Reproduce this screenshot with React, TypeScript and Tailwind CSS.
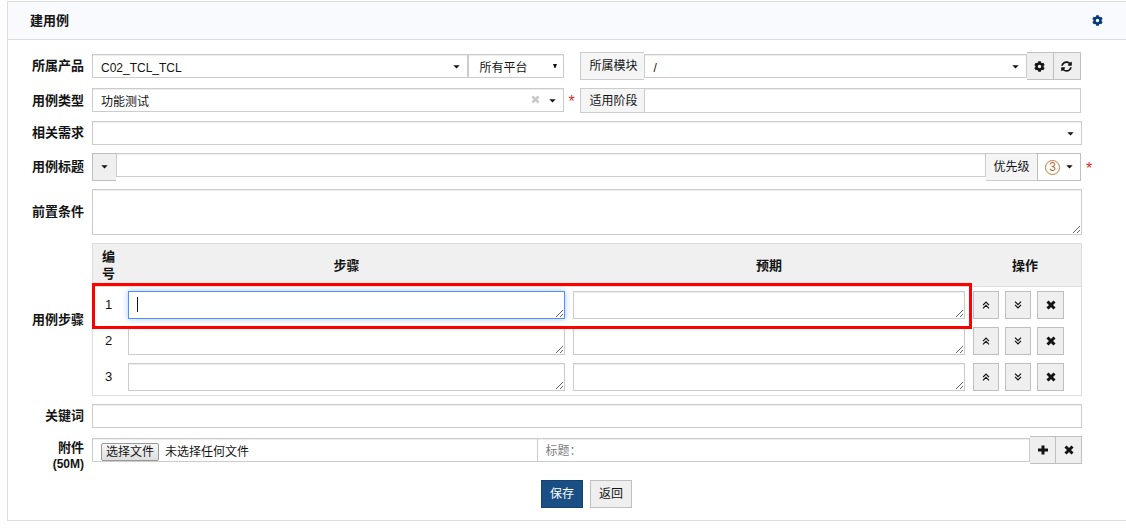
import React, { useState } from 'react';
import clsx from 'clsx';
import { FaCog, FaSyncAlt } from 'react-icons/fa';

const INPUT =
  'block min-w-0 border border-[#ccc] bg-white text-xs text-[#141414] shadow-[inset_0_1px_1px_rgba(0,0,0,0.075)] outline-none placeholder:text-[#808080]';
const FOCUS =
  'focus:border-[#4d90fe] focus:shadow-[0_0_6px_rgba(77,144,254,0.5)]';
const BUTTON =
  'flex h-7 shrink-0 items-center justify-center border border-[#bfbfbf] text-[#141414]';
const ADDON =
  'flex shrink-0 items-center border border-[#ccc] bg-[#f5f5f5] text-xs whitespace-nowrap';

function Caret({ className }: { className?: string }) {
  return (
    <svg
      className={className}
      width="7"
      height="4"
      viewBox="0 0 7 4"
      fill="currentColor"
      aria-hidden="true"
    >
      <path d="M0.3 0.2h6.4L3.5 3.6z" />
    </svg>
  );
}

function CrossIcon({ size = 10 }: { size?: number }) {
  return (
    <svg width={size} height={size} viewBox="0 0 10 10" aria-hidden="true">
      <path d="M1.5 1.5l7 7M8.5 1.5l-7 7" stroke="currentColor" strokeWidth="3" />
    </svg>
  );
}

function PlusIcon() {
  return (
    <svg width="10" height="10" viewBox="0 0 10 10" aria-hidden="true">
      <path d="M5 0.5v9M0 5h10" stroke="currentColor" strokeWidth="3" />
    </svg>
  );
}

function DoubleAngle({ down }: { down?: boolean }) {
  return (
    <svg
      className={clsx(down && 'rotate-180')}
      width="8"
      height="8"
      viewBox="0 0 8 8"
      fill="none"
      stroke="currentColor"
      strokeWidth="1.2"
      aria-hidden="true"
    >
      <path d="M1 4.2L4 1.2l3 3M1 7.4l3-3 3 3" />
    </svg>
  );
}

interface SelectProps {
  id: string;
  label?: string;
  options: string[];
  className?: string;
  small?: boolean;
  onClear?: () => void;
}

function Select({ id, label, options, className, small, onClear }: SelectProps) {
  return (
    <div className={clsx('relative min-w-0', className)}>
      <select
        id={id}
        aria-label={label}
        className={clsx(
          INPUT,
          FOCUS,
          'h-6 w-full appearance-none pt-1 pr-2',
          small ? 'pl-2.5' : 'pl-2'
        )}
      >
        {options.map((item) => (
          <option key={item}>{item}</option>
        ))}
      </select>
      {onClear && (
        <button
          type="button"
          aria-label="清除"
          onClick={onClear}
          className="absolute top-[7px] right-6 text-[#c8c8c8]"
        >
          <CrossIcon size={9} />
        </button>
      )}
      {small ? (
        <svg
          className="pointer-events-none absolute top-[10px] right-[7px]"
          width="4"
          height="4"
          viewBox="0 0 4 4"
          aria-hidden="true"
        >
          <path d="M0 0h4L2.5 4h-1z" fill="#141414" />
        </svg>
      ) : (
        <Caret className="pointer-events-none absolute top-[11px] right-2" />
      )}
    </div>
  );
}

interface RowProps {
  label: React.ReactNode;
  htmlFor?: string;
  required?: boolean;
  top?: boolean;
  children: React.ReactNode;
}

function Row({ label, htmlFor, required, top, children }: RowProps) {
  return (
    <div className={clsx('flex', top ? 'items-start' : 'items-center')}>
      <label
        htmlFor={htmlFor}
        className={clsx(
          'mr-2 w-19 shrink-0 text-right text-[13px] leading-4 font-bold',
          top && 'pt-1'
        )}
      >
        {label}
      </label>
      <div className="min-w-0 flex-1">{children}</div>
      <div className="w-11 shrink-0 pl-1">{required && <Star />}</div>
    </div>
  );
}

function Star() {
  return (
    <span className="block h-4 text-base leading-5 text-[#d2322d]">*</span>
  );
}

function StepTable() {
  const [steps, setSteps] = useState<number[]>([1, 2, 3]);

  const move = (index: number, offset: number) => {
    const target = index + offset;
    if (target < 0 || target >= steps.length) return;
    const next = [...steps];
    [next[index], next[target]] = [next[target], next[index]];
    setSteps(next);
  };

  return (
    <div className="relative">
      <table className="w-full table-fixed border-separate border-spacing-0 border border-[#ddd]">
        <colgroup>
          <col className="w-[31px]" />
          <col />
          <col className="w-[40.5%]" />
          <col className="w-28" />
        </colgroup>
        <thead>
          <tr className="bg-[#f0f0f0] text-[13px] leading-[17px]">
            <th className="border-b border-[#ddd] px-2 py-1">编号</th>
            <th className="border-b border-[#ddd] py-1">步骤</th>
            <th className="border-b border-[#ddd] py-1">预期</th>
            <th className="border-b border-[#ddd] py-1">操作</th>
          </tr>
        </thead>
        <tbody>
          {steps.map((id, index) => (
            <tr key={id}>
              <td className="p-0 text-center text-[13px]">{index + 1}</td>
              <td className="relative p-1">
                <textarea
                  aria-label={`步骤 ${index + 1}`}
                  autoFocus={id === 1}
                  placeholder=" "
                  className={clsx(
                    INPUT,
                    FOCUS,
                    'peer h-7 w-full resize px-2 py-1 placeholder-shown:caret-transparent'
                  )}
                />
                {/* text cursor of an empty field */}
                <span className="pointer-events-none absolute top-[10px] left-[13px] hidden h-[15px] w-px bg-[#141414] peer-placeholder-shown:peer-focus:block" />
              </td>
              <td className="p-1">
                <textarea
                  aria-label={`预期 ${index + 1}`}
                  className={clsx(INPUT, FOCUS, 'h-7 w-full resize px-2 py-1')}
                />
              </td>
              <td className="p-1">
                <div className="flex gap-1.5">
                  <button
                    type="button"
                    aria-label="上移"
                    className={clsx(BUTTON, 'w-[26px] bg-[#efefef]')}
                    onClick={() => move(index, -1)}
                  >
                    <DoubleAngle />
                  </button>
                  <button
                    type="button"
                    aria-label="下移"
                    className={clsx(BUTTON, 'w-[26px] bg-[#efefef]')}
                    onClick={() => move(index, 1)}
                  >
                    <DoubleAngle down />
                  </button>
                  <button
                    type="button"
                    aria-label="删除"
                    className={clsx(BUTTON, 'w-[27px] bg-[#efefef]')}
                    onClick={() => setSteps(steps.filter((s) => s !== id))}
                  >
                    <CrossIcon />
                  </button>
                </div>
              </td>
            </tr>
          ))}
        </tbody>
      </table>
      {/* highlight around the first step */}
      <div className="pointer-events-none absolute top-10 right-[110px] left-0 h-[46px] border-3 border-[#f00]" />
    </div>
  );
}

function App() {
  const [type, setType] = useState<string>('功能测试');

  return (
    <div className="bg-white pt-px pl-[7px] font-['Liberation_Sans','Noto_Sans_CJK_SC',sans-serif] text-[#141414]">
      <form
        className="border border-r-0 border-[#ddd]"
        onSubmit={(e) => e.preventDefault()}
      >
        <div className="flex h-[38px] items-center justify-between border-b border-[#ddd] bg-[#f8fafe] pr-[23px] pl-[22px]">
          <h1 className="text-[13px] font-bold">建用例</h1>
          <button type="button" aria-label="设置" className="text-[#03387a]">
            <FaCog size={11} />
          </button>
        </div>

        <div className="flex flex-col gap-2 py-3">
          <Row label="所属产品" htmlFor="product">
            <div className="grid grid-cols-[488fr_500fr] items-center pr-px">
              <div className="flex pr-4">
                <Select id="product" options={['C02_TCL_TCL']} className="flex-1" />
                <Select
                  id="branch"
                  label="平台"
                  options={['所有平台']}
                  className="w-24"
                  small
                />
              </div>
              <div className="flex items-center">
                <label htmlFor="module" className={clsx(ADDON, 'h-7 w-16 border-r-0 pl-2')}>
                  所属模块
                </label>
                <Select id="module" options={['/']} className="flex-1" />
                <button
                  type="button"
                  aria-label="维护模块"
                  className={clsx(BUTTON, 'w-[26px] border-x-0 bg-[#efefef]')}
                >
                  <FaCog size={11} />
                </button>
                <button
                  type="button"
                  aria-label="刷新"
                  className={clsx(BUTTON, 'w-7 bg-[#efefef]')}
                >
                  <FaSyncAlt size={11} />
                </button>
              </div>
            </div>
          </Row>

          <Row label="用例类型" htmlFor="type">
            <div className="grid grid-cols-[488fr_500fr] items-start pr-px">
              <div className="flex items-center">
                <Select
                  id="type"
                  options={[type]}
                  className="flex-1"
                  onClear={() => setType('')}
                />
                <div className="w-4 pl-1">
                  <Star />
                </div>
              </div>
              <div className="flex items-start">
                <label
                  htmlFor="stage"
                  className={clsx(ADDON, 'h-[25px] w-16 border-r-0 pl-2')}
                >
                  适用阶段
                </label>
                <input
                  id="stage"
                  type="text"
                  className={clsx(INPUT, FOCUS, 'h-[25px] flex-1 px-2')}
                />
              </div>
            </div>
          </Row>

          <Row label="相关需求" htmlFor="story">
            <Select id="story" options={['']} />
          </Row>

          <Row label="用例标题" htmlFor="title" required>
            <div className="flex items-start pr-px">
              <button
                type="button"
                aria-label="标题颜色"
                className={clsx(BUTTON, 'w-6 border-r-0 bg-[#efefef]')}
              >
                <Caret />
              </button>
              <input
                id="title"
                type="text"
                className={clsx(INPUT, FOCUS, 'h-6 flex-1 px-2')}
              />
              <span className={clsx(ADDON, 'h-7 w-[51px] justify-center border-x-0')}>
                优先级
              </span>
              <button
                type="button"
                aria-label="优先级 3"
                className={clsx(BUTTON, 'w-11 gap-1.5 bg-white')}
              >
                <span className="flex size-[15px] items-center justify-center rounded-full border border-[#c27a43] text-xs leading-3 text-[#b8692f]">
                  3
                </span>
                <Caret />
              </button>
            </div>
          </Row>

          <Row label="前置条件" htmlFor="precondition">
            <textarea
              id="precondition"
              className={clsx(INPUT, FOCUS, 'h-[46px] w-full resize px-2 py-1')}
            />
          </Row>

          <Row label="用例步骤">
            <StepTable />
          </Row>

          <Row label="关键词" htmlFor="keywords">
            <input
              id="keywords"
              type="text"
              className={clsx(INPUT, FOCUS, 'h-6 w-full px-2')}
            />
          </Row>

          <Row
            top
            htmlFor="file"
            label={
              <>
                附件
                <br />
                <span className="text-xs">(50M)</span>
              </>
            }
          >
            <div className="flex items-center">
              <label htmlFor="file" className={clsx(INPUT, 'h-6 w-[45%] overflow-hidden px-2')}>
                <span className="flex h-full items-end gap-1.5">
                  <span className="rounded-xs border border-[#999] bg-linear-to-b from-[#f6f6f6] to-[#dedede] px-1 leading-4">
                    选择文件
                  </span>
                  <span className="leading-[18px]">未选择任何文件</span>
                </span>
                <input id="file" type="file" className="hidden" />
              </label>
              <input
                type="text"
                aria-label="标题"
                placeholder="标题："
                className={clsx(INPUT, FOCUS, 'h-6 flex-1 border-l-0 px-2 pt-0.5')}
              />
              <button
                type="button"
                aria-label="添加附件"
                className={clsx(BUTTON, 'w-[25px] border-x-0 bg-[#efefef]')}
              >
                <PlusIcon />
              </button>
              <button
                type="button"
                aria-label="删除附件"
                className={clsx(BUTTON, 'w-[27px] bg-[#efefef]')}
              >
                <CrossIcon />
              </button>
            </div>
          </Row>

          <div className="mr-[45px] ml-21 flex justify-center gap-[7px]">
            <button
              type="submit"
              className="h-7 border border-[#164270] bg-[#1a4f85] px-2 text-xs text-white"
            >
              保存
            </button>
            <button type="button" className={clsx(BUTTON, 'bg-[#efefef] px-2 text-xs')}>
              返回
            </button>
          </div>
        </div>
      </form>
    </div>
  );
}

export default App;
